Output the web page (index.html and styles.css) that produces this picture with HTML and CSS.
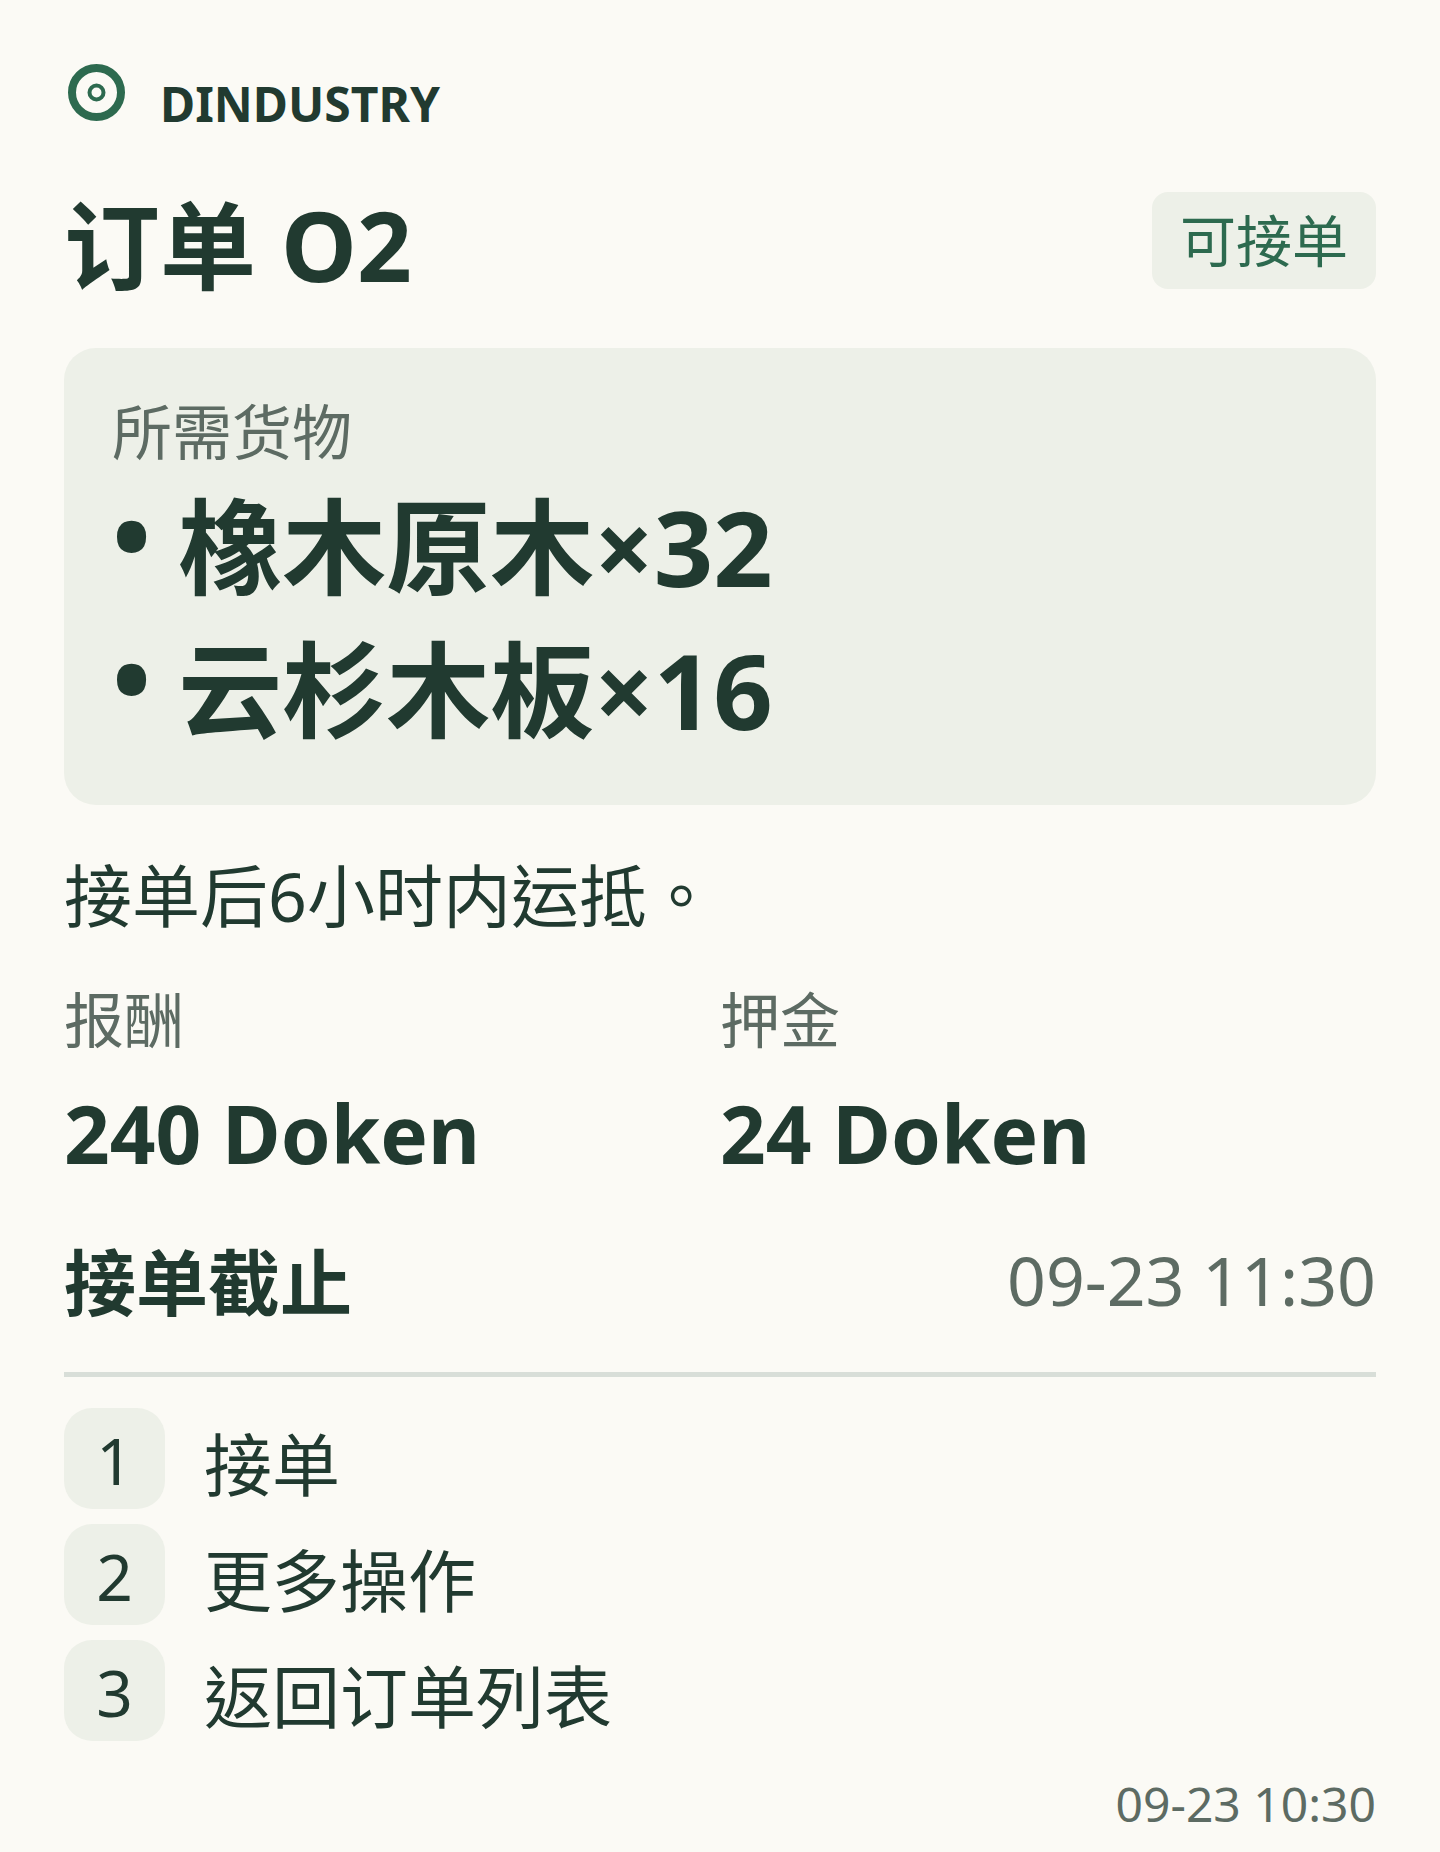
FILE: index.html
```html
<!DOCTYPE html>
<html lang="zh-TW">

<head>
    <meta charset="UTF-8">
    <meta name="viewport" content="width=device-width, initial-scale=1.0">
    <title>订单 O2</title>
    <link rel="stylesheet" href="styles.css">
</head>

<body>
    <div class="brand">
        <svg class="brand-icon" viewBox="0 0 64 64" width="64" height="64">
            <circle cx="32.5" cy="32.5" r="24.5" fill="none" stroke="#2d6a4f" stroke-width="8" />
            <circle cx="32.5" cy="32.5" r="7" fill="none" stroke="#2d6a4f" stroke-width="4" />
        </svg>
        <span class="brand-name">DINDUSTRY</span>
    </div>

    <div class="title-row">
        <h1 class="title">订单 O2</h1>
        <span class="tag">可接单</span>
    </div>

    <div class="goods">
        <div class="goods-label">所需货物</div>
        <div class="goods-item"><span class="bullet">•</span> 橡木原木×32</div>
        <div class="goods-item"><span class="bullet">•</span> 云杉木板×16</div>
    </div>

    <p class="note">接单后6小时内运抵。</p>

    <div class="stats">
        <div>
            <div class="stat-label">报酬</div>
            <div class="stat-value">240 Doken</div>
        </div>
        <div>
            <div class="stat-label">押金</div>
            <div class="stat-value">24 Doken</div>
        </div>
    </div>

    <div class="deadline">
        <span class="deadline-label">接单截止</span>
        <span class="deadline-time">09-23 11:30</span>
    </div>

    <div class="steps">
        <div class="step"><span class="step-num">1</span><span class="step-text">接单</span></div>
        <div class="step"><span class="step-num">2</span><span class="step-text">更多操作</span></div>
        <div class="step"><span class="step-num">3</span><span class="step-text">返回订单列表</span></div>
    </div>

    <div class="footer-time">09-23 10:30</div>
</body>

</html>
```

FILE: styles.css
```css
body {
    margin: 0;
    padding: 60px 64px 0;
    background-color: #fbfaf5;
    color: #213a30;
    font-family: "Noto Sans", "Noto Sans CJK TC", sans-serif;
}

.brand {
    display: flex;
    align-items: center;
    gap: 32px;
    height: 86px;
}

.brand-icon {
    flex: none;
    margin-bottom: 22px;
}

.brand-name {
    font-size: 48px;
    font-weight: 700;
}

.title-row {
    display: flex;
    justify-content: space-between;
    align-items: center;
    margin-top: 39px;
}

.title {
    margin: 0;
    font-size: 96px;
    font-weight: 700;
    line-height: 120px;
}

.tag {
    margin-bottom: 10px;
    padding: 8px 28px;
    border-radius: 16px;
    background-color: #edf0e8;
    color: #2d6a4f;
    font-size: 56px;
    line-height: 81px;
}

.goods {
    margin-top: 43px;
    padding: 42px 48px 44px;
    border-radius: 32px;
    background-color: #edf0e8;
}

.goods-label {
    margin-bottom: 1px;
    color: #5d6b63;
    font-size: 60px;
    line-height: 84px;
}

.goods-item {
    font-size: 104px;
    font-weight: 700;
    line-height: 143px;
}

.bullet {
    vertical-align: 12px;
    line-height: 0;
}

.note {
    margin: 45px 0 0;
    font-size: 68px;
    line-height: 92px;
}

.stats {
    display: grid;
    grid-template-columns: 1fr 1fr;
    margin-top: 37px;
}

.stat-label {
    color: #5d6b63;
    font-size: 60px;
    line-height: 82px;
}

.stat-value {
    margin-top: 20px;
    font-size: 80px;
    font-weight: 700;
    line-height: 104px;
}

.deadline {
    display: flex;
    justify-content: space-between;
    align-items: center;
    margin-top: 48px;
    padding-bottom: 41px;
    border-bottom: 5px solid #d8ded8;
}

.deadline-label {
    font-size: 72px;
    font-weight: 700;
    line-height: 98px;
}

.deadline-time {
    margin-bottom: 5px;
    color: #5d6b63;
    font-size: 68px;
}

.steps {
    display: flex;
    flex-direction: column;
    gap: 15px;
    margin-top: 31px;
}

.step {
    display: flex;
    align-items: center;
    gap: 39px;
}

.step-num {
    display: flex;
    justify-content: center;
    align-items: center;
    box-sizing: border-box;
    width: 101px;
    height: 101px;
    padding-top: 3px;
    border-radius: 28px;
    background-color: #edf0e8;
    font-size: 64px;
}

.step-text {
    padding-top: 12px;
    font-size: 68px;
    line-height: 85px;
}

.footer-time {
    margin-top: 30px;
    color: #5d6b63;
    font-size: 48px;
    text-align: right;
}
```
